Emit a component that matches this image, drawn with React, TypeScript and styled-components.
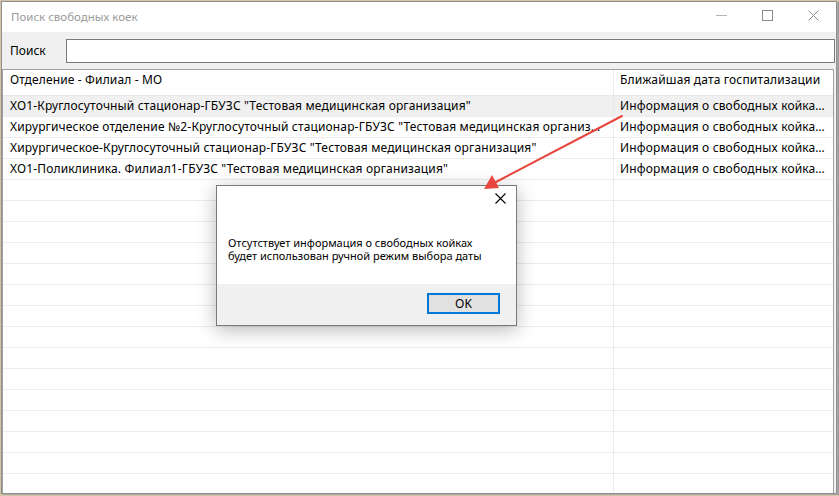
import React from 'react'
import styled, { createGlobalStyle } from 'styled-components'

const GlobalStyle = createGlobalStyle`
  html, body {
    margin: 0;
    padding: 0;
    background: #d3c5a6;
    overflow: hidden;
  }
  body {
    font-family: "Noto Sans", "Open Sans", Arial, sans-serif;
    font-size: 12px;
    color: #000;
  }
`

const rows = [
  {
    name: 'ХО1-Круглосуточный стационар-ГБУЗС "Тестовая медицинская организация"',
    date: 'Информация о свободных койках отсутствует',
    selected: true
  },
  {
    name: 'Хирургическое отделение №2-Круглосуточный стационар-ГБУЗС "Тестовая медицинская организация"',
    date: 'Информация о свободных койках отсутствует'
  },
  {
    name: 'Хирургическое-Круглосуточный стационар-ГБУЗС "Тестовая медицинская организация"',
    date: 'Информация о свободных койках отсутствует'
  },
  {
    name: 'ХО1-Поликлиника. Филиал1-ГБУЗС "Тестовая медицинская организация"',
    date: 'Информация о свободных койках отсутствует'
  }
]

const EMPTY_ROWS = 15

export default function App() {
  return (
    <>
      <GlobalStyle />
      <S.Page>
        <S.Window>
          <S.TitleBar>
            <S.Title>Поиск свободных коек</S.Title>
            <S.Controls>
              <S.ControlButton>
                <svg width='11' height='11' viewBox='0 0 11 11'>
                  <line x1='0' y1='5.5' x2='11' y2='5.5' stroke='#b4b4b4' strokeWidth='1' />
                </svg>
              </S.ControlButton>
              <S.ControlButton>
                <svg width='11' height='11' viewBox='0 0 11 11'>
                  <rect x='0.5' y='0.5' width='10' height='10' fill='none' stroke='#8c8c8c' strokeWidth='1' />
                </svg>
              </S.ControlButton>
              <S.ControlButton>
                <svg width='11' height='11' viewBox='0 0 11 11'>
                  <path d='M0.5 0.5 L10.5 10.5 M10.5 0.5 L0.5 10.5' stroke='#8c8c8c' strokeWidth='1' />
                </svg>
              </S.ControlButton>
            </S.Controls>
          </S.TitleBar>

          <S.Body>
            <S.SearchRow>
              <S.SearchLabel>Поиск</S.SearchLabel>
              <S.SearchInput />
            </S.SearchRow>

            <S.Grid>
              <S.HeaderRow>
                <S.Cell first>Отделение - Филиал - МО</S.Cell>
                <S.Cell>Ближайшая дата госпитализации</S.Cell>
              </S.HeaderRow>
              {rows.map((row, i) => (
                <S.Row key={i} selected={row.selected}>
                  <S.Cell first>{row.name}</S.Cell>
                  <S.Cell>{row.date}</S.Cell>
                </S.Row>
              ))}
              {Array.from({ length: EMPTY_ROWS }).map((_, i) => (
                <S.Row key={`e${i}`}>
                  <S.Cell first />
                  <S.Cell />
                </S.Row>
              ))}
            </S.Grid>
          </S.Body>

          <S.Arrow width='839' height='496' viewBox='0 0 839 496'>
            <line x1='622' y1='116' x2='496' y2='182' stroke='#e8453c' strokeWidth='2' strokeLinecap='round' />
            <polygon points='484,189 492,175 499,188' fill='#e8453c' />
          </S.Arrow>

          <S.Dialog>
            <S.DialogTop>
              <S.DialogClose>
                <svg width='11' height='11' viewBox='0 0 11 11'>
                  <path d='M0.5 0.5 L10.5 10.5 M10.5 0.5 L0.5 10.5' stroke='#000' strokeWidth='1.1' />
                </svg>
              </S.DialogClose>
              <S.Message>
                Отсутствует информация о свободных койках<br />
                будет использован ручной режим выбора даты
              </S.Message>
            </S.DialogTop>
            <S.DialogBottom>
              <S.OkButton>OK</S.OkButton>
            </S.DialogBottom>
          </S.Dialog>
        </S.Window>
      </S.Page>
    </>
  )
}

const S = {
  Page: styled.div`
    width: 839px;
    height: 496px;
    padding: 1px 0 0 1px;
    box-sizing: border-box;
  `,
  Window: styled.div`
    position: relative;
    width: 836px;
    height: 493px;
    box-sizing: border-box;
    border: 1px solid #8f8f8f;
    box-shadow: 1px 1px 0 #a8a8a8, 2px 1px 0 #9a9a9a;
    background: #f0f0f0;
    display: flex;
    flex-direction: column;
  `,
  TitleBar: styled.div`
    height: 30px;
    flex-shrink: 0;
    background: #fff;
    display: flex;
    align-items: center;
    justify-content: space-between;
  `,
  Title: styled.div`
    padding-left: 9px;
    color: #9a9a9a;
    font-size: 11.5px;
    margin-top: -1px;
  `,
  Controls: styled.div`
    display: flex;
    height: 100%;
  `,
  ControlButton: styled.div`
    width: 46px;
    height: 100%;
    display: flex;
    align-items: center;
    justify-content: center;
    margin-top: -2px;
  `,
  Body: styled.div`
    flex: 1;
    display: flex;
    flex-direction: column;
    min-height: 0;
  `,
  SearchRow: styled.div`
    height: 37px;
    flex-shrink: 0;
    display: flex;
    align-items: center;
    padding: 0 1px 0 8px;
    box-sizing: border-box;
  `,
  SearchLabel: styled.div`
    width: 56px;
    flex-shrink: 0;
    font-size: 12px;
    margin-top: -1px;
  `,
  SearchInput: styled.input`
    flex: 1;
    height: 24px;
    box-sizing: border-box;
    border: 1px solid #7a7a7a;
    background: #fff;
    outline: none;
    margin: 0;
    padding: 0 4px;
    font: inherit;
  `,
  Grid: styled.div`
    flex: 1;
    min-height: 0;
    overflow: hidden;
    width: 832px;
    box-sizing: border-box;
    border: 1px solid #a0a0a0;
    border-bottom: none;
    background: #fff;
    display: flex;
    flex-direction: column;
  `,
  HeaderRow: styled.div`
    display: grid;
    grid-template-columns: 611px 1fr;
    height: 26px;
    flex-shrink: 0;
    box-sizing: border-box;
    border-bottom: 1px solid #e6e6e6;
    background: #fff;
  `,
  Row: styled.div<{ selected?: boolean }>`
    display: grid;
    grid-template-columns: 611px 1fr;
    height: 21px;
    flex-shrink: 0;
    box-sizing: border-box;
    border-bottom: 1px solid #ececec;
    background: ${p => (p.selected ? '#f0f0f0' : '#fff')};
  `,
  Cell: styled.div<{ first?: boolean }>`
    display: block;
    padding: 0 6px 0 ${p => (p.first ? '7px' : '6px')};
    border-right: ${p => (p.first ? '1px solid #eaeaea' : 'none')};
    min-width: 0;
    overflow: hidden;
    white-space: nowrap;
    text-overflow: ellipsis;
    font-size: 12px;
    letter-spacing: 0.15px;
    line-height: 20px;
  `,
  Arrow: styled.svg`
    position: absolute;
    left: -2px;
    top: -2px;
    pointer-events: none;
    z-index: 3;
  `,
  Dialog: styled.div`
    position: absolute;
    left: 214px;
    top: 183px;
    width: 301px;
    height: 141px;
    box-sizing: border-box;
    border: 1px solid #7a7a7a;
    background: #f0f0f0;
    box-shadow: 0 4px 18px rgba(0, 0, 0, 0.28);
    display: flex;
    flex-direction: column;
    z-index: 2;
  `,
  DialogTop: styled.div`
    position: relative;
    height: 98px;
    background: #fff;
    padding: 50px 12px 0 11px;
    box-sizing: border-box;
  `,
  DialogClose: styled.div`
    position: absolute;
    right: 10px;
    top: 7px;
    width: 11px;
    height: 11px;
    display: flex;
  `,
  Message: styled.div`
    font-size: 11px;
    line-height: 13px;
  `,
  DialogBottom: styled.div`
    flex: 1;
    display: flex;
    justify-content: flex-end;
    align-items: flex-start;
    padding: 9px 16px 0 0;
  `,
  OkButton: styled.div`
    width: 73px;
    height: 21px;
    box-sizing: border-box;
    border: 2px solid #0078d7;
    background: #e1e1e1;
    display: flex;
    align-items: center;
    justify-content: center;
    font-size: 12px;
  `
}
